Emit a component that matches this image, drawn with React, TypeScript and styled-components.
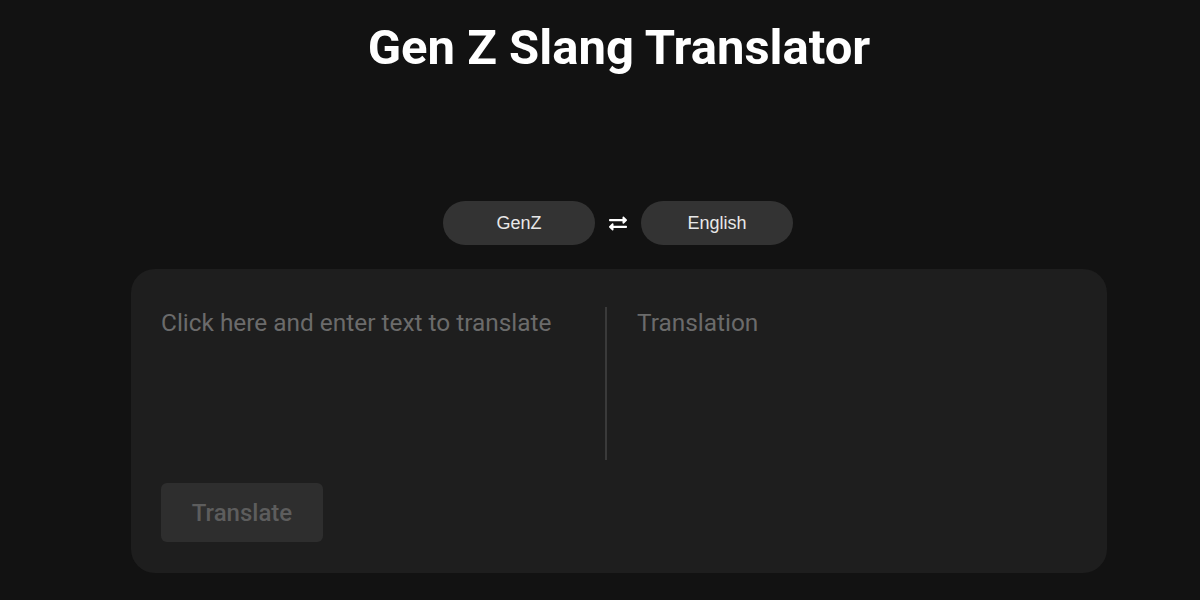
import React, { useState } from "react";
import styled, { createGlobalStyle } from "styled-components";
import { FaExchangeAlt } from "react-icons/fa";

const GlobalStyle = createGlobalStyle`
  html, body {
    margin: 0;
    padding: 0;
    background: #121212;
  }
  body {
    font-family: Roboto, "Liberation Sans", sans-serif;
    color: #ffffff;
  }
`;

const Page = styled.main`
  min-height: 600px;
  box-sizing: border-box;
  padding: 0 0 0 38px;
  display: flex;
  flex-direction: column;
  align-items: center;
`;

const Title = styled.h1`
  margin: 20px 0 0;
  font-family: Roboto, sans-serif;
  font-weight: 700;
  font-size: 49px;
  line-height: 56px;
  color: #ffffff;
`;

const LangBar = styled.div`
  margin-top: 125px;
  padding-right: 2px;
  display: flex;
  align-items: center;
  gap: 14px;
`;

const LangPill = styled.button`
  width: 152px;
  height: 44px;
  border: none;
  border-radius: 22px;
  background: #333333;
  color: #e8e8e8;
  font-family: "Liberation Sans", Arial, sans-serif;
  font-size: 18px;
  cursor: pointer;
`;

const SwapButton = styled.button`
  width: 18px;
  height: 20px;
  padding: 0;
  border: none;
  background: transparent;
  color: #ffffff;
  display: flex;
  align-items: center;
  justify-content: center;
  cursor: pointer;
`;

const Card = styled.section`
  margin-top: 24px;
  width: 976px;
  box-sizing: border-box;
  background: #1e1e1e;
  border-radius: 24px;
  padding: 38px 30px 31px;
  display: flex;
  flex-direction: column;
  gap: 23px;
`;

const Panes = styled.div`
  display: grid;
  grid-template-columns: 444px 1fr;
  height: 153px;
`;

const Input = styled.textarea`
  margin: 0;
  padding: 0;
  border: none;
  outline: none;
  resize: none;
  background: transparent;
  color: #d0d0d0;
  font-family: Roboto, sans-serif;
  font-size: 24.4px;
  line-height: 32px;
  &::placeholder {
    color: #6b6b6b;
  }
`;

const Output = styled.div`
  border-left: 2px solid #3a3a3a;
  padding-left: 30px;
  color: #6b6b6b;
  font-family: Roboto, sans-serif;
  font-size: 24.4px;
  line-height: 32px;
`;

const TranslateButton = styled.button`
  align-self: flex-start;
  width: 162px;
  height: 59px;
  border: none;
  border-radius: 6px;
  background: #2e2e2e;
  color: #5d5d5d;
  font-family: Roboto, sans-serif;
  font-weight: 500;
  font-size: 24px;
  cursor: pointer;
`;

export default function App() {
  const [from, setFrom] = useState("GenZ");
  const [to, setTo] = useState("English");
  const [text, setText] = useState("");
  return (
    <>
      <GlobalStyle />
      <Page>
        <Title>Gen Z Slang Translator</Title>
        <LangBar>
          <LangPill>{from}</LangPill>
          <SwapButton
            aria-label="swap"
            onClick={() => {
              setFrom(to);
              setTo(from);
            }}
          >
            <FaExchangeAlt size={19} />
          </SwapButton>
          <LangPill>{to}</LangPill>
        </LangBar>
        <Card>
          <Panes>
            <Input
              placeholder="Click here and enter text to translate"
              value={text}
              onChange={(e) => setText(e.target.value)}
            />
            <Output>Translation</Output>
          </Panes>
          <TranslateButton disabled={!text}>Translate</TranslateButton>
        </Card>
      </Page>
    </>
  );
}
